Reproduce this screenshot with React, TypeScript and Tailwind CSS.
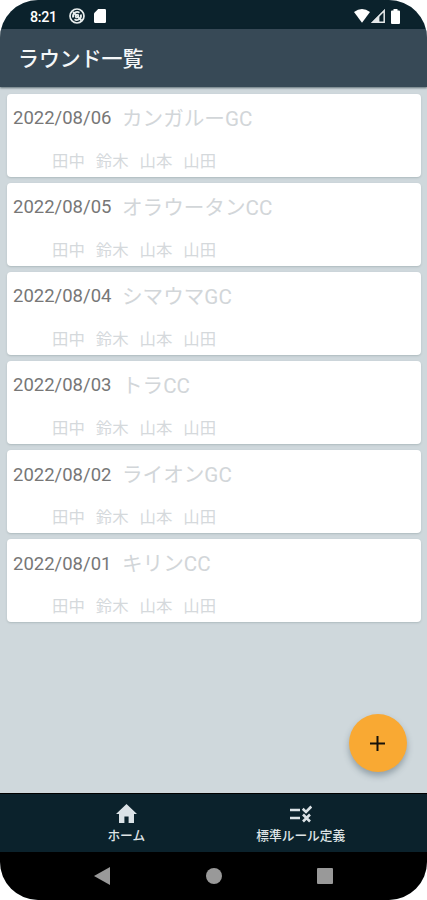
import React from "react";

const rounds = [
  { date: "2022/08/06", course: "カンガルーGC" },
  { date: "2022/08/05", course: "オラウータンCC" },
  { date: "2022/08/04", course: "シマウマGC" },
  { date: "2022/08/03", course: "トラCC" },
  { date: "2022/08/02", course: "ライオンGC" },
  { date: "2022/08/01", course: "キリンCC" },
];

const players = ["田中", "鈴木", "山本", "山田"];

function StatusBar() {
  return (
    <div className="flex h-[29px] shrink-0 items-center bg-[#0b222c] pt-[3px] pr-[27px] pl-[30px] text-white">
      <span className="w-[39px] pt-[2px] text-[14.3px] leading-none font-medium tracking-[-0.3px]">8:21</span>
      <svg className="h-4 w-4" viewBox="0 0 16 16" fill="none" stroke="#e9eeee">
        <circle cx="8" cy="8" r="7" strokeWidth="1.7" />
        <path d="M4.2 9.5A4.2 4.2 0 0 1 10.5 4.7M11.8 6.5A4.2 4.2 0 0 1 5.5 11.3M4 4l8.5 8.5" strokeWidth="1.8" />
        <circle cx="8" cy="8" r="1.7" strokeWidth="1.3" />
      </svg>
      <svg className="ml-[9px] h-[14px] w-3" viewBox="0 0 12 14" fill="#ffffff">
        <path d="M4.2 0H10.7Q12 0 12 1.3V12.7Q12 14 10.7 14H1.3Q0 14 0 12.7V4.2Z" />
      </svg>
      <svg className="ml-auto h-[14px] w-4" viewBox="0 0 16 14" fill="#ffffff">
        <path d="M0 3Q8 -3 16 3L8 13.7Z" />
      </svg>
      <svg className="ml-[1px] h-[14px] w-[14px]" viewBox="0 0 14 14">
        <path d="M1.6 13.2H13.2V1.6Z" fill="none" stroke="#e6e9ea" strokeWidth="1.5" />
        <path d="M8.4 6.5V13H2.5Z" fill="#e6e9ea" />
      </svg>
      <svg className="ml-[6px] h-[15px] w-[9px]" viewBox="0 0 9 15" fill="#ffffff">
        <path d="M2.5 0H6.5V1.6H8Q9 1.6 9 2.6V14Q9 15 8 15H1Q0 15 0 14V2.6Q0 1.6 1 1.6H2.5Z" />
      </svg>
    </div>
  );
}

function RoundCard({ date, course }: { date: string; course: string }) {
  return (
    <article className="h-[82.5px] shrink-0 rounded-[4px] bg-white pl-[6px] whitespace-nowrap shadow-[0_1px_2px_rgba(60,80,85,0.22)]">
      <div className="flex h-[50px] items-center">
        <span className="w-[109px] text-[18.5px] font-normal text-[#777777]">{date}</span>
        <span className="text-[20.6px] font-normal text-[#d2d6d9]">{course}</span>
      </div>
      <div className="flex h-[36px] items-center gap-[11px] pl-[39px] text-[16.4px] font-normal text-[#d5d9dc]">
        {players.map((name) => (
          <span key={name}>{name}</span>
        ))}
      </div>
    </article>
  );
}

export default function App() {
  return (
    <div className="h-[900px] w-[427px] bg-white font-['Roboto','Noto_Sans_CJK_JP',sans-serif]">
      <div className="flex h-full flex-col overflow-hidden rounded-[38px] bg-[#cfd8dc]">
        <StatusBar />
        <header className="z-10 flex h-[58px] shrink-0 items-center bg-[#374956] pt-[4px] pl-[18px] shadow-[0_1px_2px_rgba(20,40,50,0.6)]">
          <h1 className="text-[20.9px] font-medium text-[#f4f7f8]">ラウンド一覧</h1>
        </header>
        <main className="relative flex min-h-0 flex-1 flex-col gap-[6.6px] bg-[#cfd8dc] pt-[7px] pr-[6px] pl-[7px]">
          {rounds.map((round) => (
            <RoundCard key={round.date} date={round.date} course={round.course} />
          ))}
          <button
            aria-label="追加"
            className="absolute right-[20px] bottom-[21px] flex h-[58px] w-[58px] items-center justify-center rounded-full bg-[#f9a933] shadow-[0_4px_6px_rgba(50,70,85,0.38)]"
          >
            <svg className="mr-[1px] h-[15px] w-[15px]" viewBox="0 0 15 15" stroke="#17120a" strokeWidth="2">
              <path d="M7.5 0V15M0 7.5H15" />
            </svg>
          </button>
        </main>
        <nav className="flex h-[59px] shrink-0 border-t border-black bg-[#0b222c] px-[39px] text-[12.7px] leading-none font-medium text-[#dfe4e6]">
          <a className="flex w-[175px] flex-col items-center pt-[10px]">
            <svg className="h-[19px] w-[21px]" viewBox="0 0 21 19" fill="#dbe2e6">
              <path d="M8.4 19V12.4H12.6V19H18V10H21L10.5 0L0 10H3V19Z" />
            </svg>
            <span className="mt-[7px]">ホーム</span>
          </a>
          <a className="flex w-[175px] flex-col items-center pt-[11px]">
            <svg className="h-[18px] w-[22px]" viewBox="0 0 22 18" fill="none" stroke="#dbe2e6" strokeWidth="2.6">
              <path d="M0 5H10M0 13H10M12.7 3.8L16 7L21.3 1.5M13 9.5L20 16.5M20 9.5L13 16.5" />
            </svg>
            <span className="mt-[7px] whitespace-nowrap">標準ルール定義</span>
          </a>
        </nav>
        <div className="flex h-[48px] shrink-0 items-center bg-black pl-[94px]">
          <svg className="h-[18px] w-4" viewBox="0 0 16 18" fill="#999999">
            <path d="M16 0V18L0 9Z" />
          </svg>
          <span className="ml-[96px] h-4 w-4 rounded-full bg-[#999999]" />
          <span className="ml-[95px] h-4 w-4 rounded-[1px] bg-[#999999]" />
        </div>
      </div>
    </div>
  );
}
